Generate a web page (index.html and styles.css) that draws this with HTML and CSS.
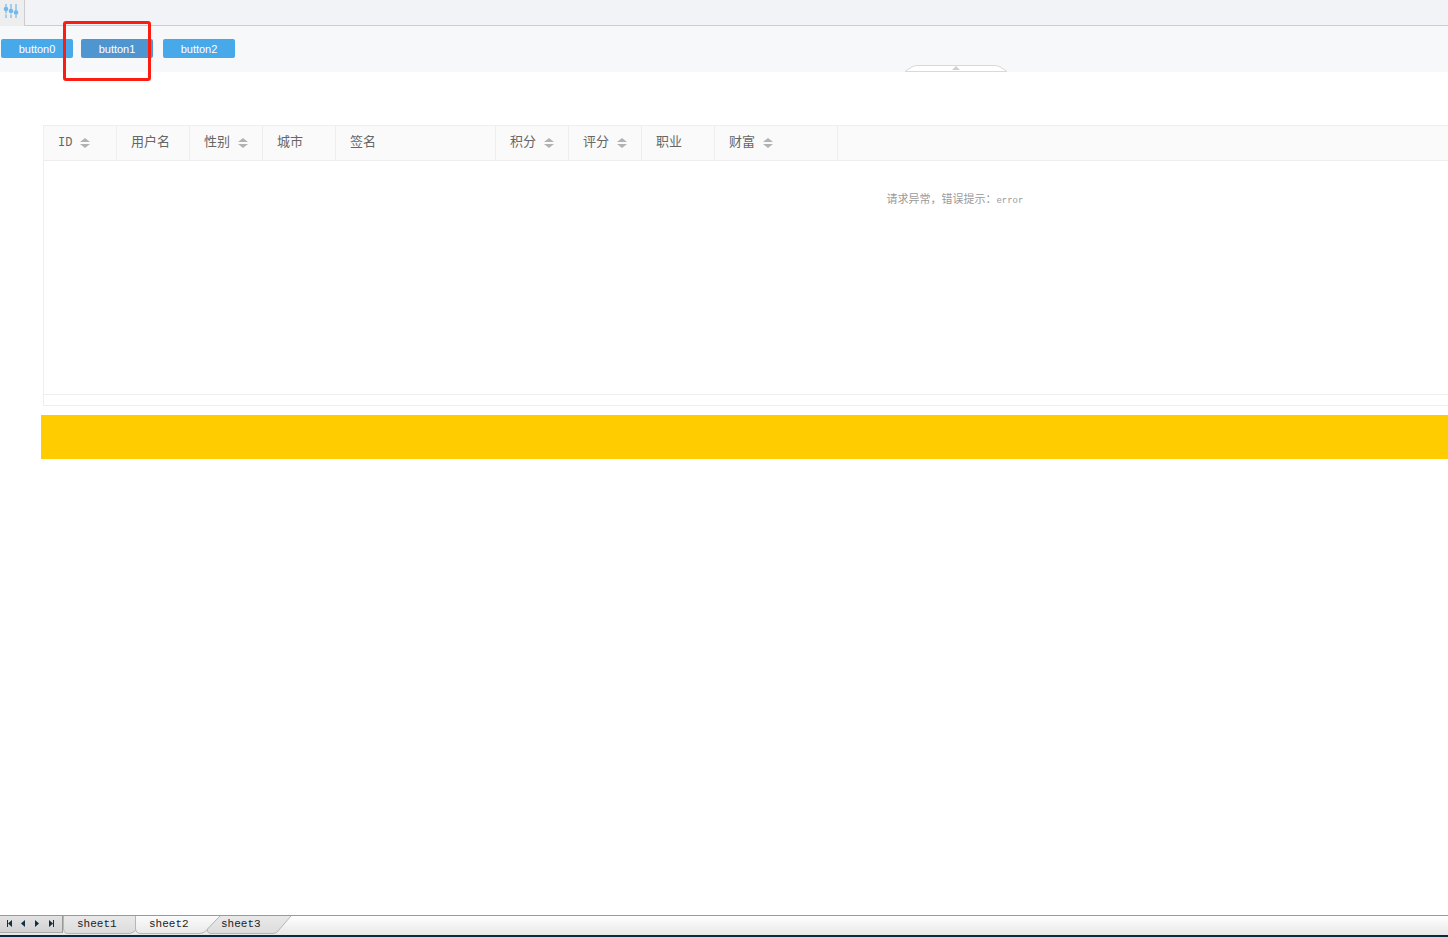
FILE: index.html
```html
<!DOCTYPE html>
<html lang="zh-CN">
<head>
<meta charset="utf-8">
<title>sheet2</title>
<link rel="stylesheet" href="styles.css">
</head>
<body>
<div class="tabbar">
  <button class="settings" type="button" aria-label="Settings">
    <svg width="16" height="16" viewBox="0 0 16 16" fill="none" stroke-width="2">
      <path d="M3 1V15M8 1V15M13 1V15" stroke="#9fcef1"/>
      <path d="M0 11H16" stroke="#eee" stroke-width="1"/>
      <g fill="#75b9eb"><circle cx="3" cy="6" r="2.300"/><circle cx="8" cy="8" r="2.300"/><circle cx="13" cy="9.500" r="2.300"/></g>
    </svg>
  </button>
  <div class="tabbar-rest"></div>
</div>
<div class="toolbar">
  <button class="btn" type="button">button0</button>
  <div class="marked"><button class="btn btn-active" type="button">button1</button><span class="marker"></span></div>
  <button class="btn" type="button">button2</button>
  <button class="collapse" type="button" aria-label="Collapse">
    <svg width="104" height="7" viewBox="0 0 104 7"><path d="M1 6.500L7 2.500Q10 .5 13 .5H91Q94 .5 97 2.500L103 6.500Z" fill="#fff" stroke="#d9d9d9"/><path d="M48 5L52 1L56 5Z" fill="#d0d0d0"/></svg>
  </button>
</div>
<main class="content">
  <div class="grid">
    <table class="grid-head">
      <colgroup><col class="w-s"><col class="w-s"><col class="w-s"><col class="w-s"><col class="w-l"><col class="w-s"><col class="w-s"><col class="w-s"><col class="w-m"><col></colgroup>
      <thead><tr>
        <th><span class="id">ID</span><span class="sort"></span></th>
        <th>用户名</th>
        <th>性别<span class="sort"></span></th>
        <th>城市</th>
        <th>签名</th>
        <th>积分<span class="sort"></span></th>
        <th>评分<span class="sort"></span></th>
        <th>职业</th>
        <th>财富<span class="sort"></span></th>
        <td></td>
      </tr></thead>
    </table>
    <div class="grid-body"><p class="message">请求异常，错误提示：<span class="latin">error</span></p></div>
    <div class="grid-foot"></div>
  </div>
  <div class="banner"></div>
</main>
<footer class="sheets">
  <div class="pager">
    <button type="button" aria-label="First"><svg width="7" height="7" viewBox="0 0 7 7"><path d="M1 0H2V7H1ZM6 0V7L2 3.500Z"/></svg></button>
    <button type="button" aria-label="Previous"><svg width="7" height="7" viewBox="0 0 7 7"><path d="M5 0V7L1 3.500Z"/></svg></button>
    <button type="button" aria-label="Next"><svg width="7" height="7" viewBox="0 0 7 7"><path d="M1 0V7L5 3.500Z"/></svg></button>
    <button type="button" aria-label="Last"><svg width="7" height="7" viewBox="0 0 7 7"><path d="M1 0V7L5 3.500ZM5 0H6V7H5Z"/></svg></button>
  </div>
  <div class="tabs">
    <svg class="tabs-shape" width="230" height="19" viewBox="0 0 230 19">
      <defs>
        <linearGradient id="tab" x2="0" y2="1"><stop stop-color="#e9e9e9"/><stop offset="1" stop-color="#dcdcdc"/></linearGradient>
        <linearGradient id="open" x2="0" y2="1"><stop stop-color="#fbfbfb"/><stop offset="1" stop-color="#e9e9e9"/></linearGradient>
      </defs>
      <g stroke="#b9b5b2">
        <path d="M.5 0V13Q1 17.500 5 17.500H66Q70 17.500 74 13V0" fill="url(#tab)"/>
        <path d="M72.500 0V13Q73 17.500 78 17.500H137Q141 17.500 145 13L157 0" fill="url(#open)"/>
        <path d="M157 0L144.500 13Q143.500 17.500 149 17.500H210Q213 17.500 215 15L228 0" fill="url(#tab)"/>
      </g>
    </svg>
    <button class="tab" type="button">sheet1</button>
    <button class="tab" type="button">sheet2</button>
    <button class="tab" type="button">sheet3</button>
  </div>
</footer>
</body>
</html>
```
FILE: styles.css
```css
* { box-sizing: border-box; }
body {
  margin: 0;
  min-height: 100vh;
  display: flex;
  flex-direction: column;
  overflow-x: hidden;
  background: #fff;
  font-family: "Liberation Sans", "Noto Sans CJK SC", sans-serif;
}
button { border: 0; padding: 0; margin: 0; background: none; font: inherit; color: inherit; }
svg { display: block; }
.tabbar { display: flex; height: 26px; background: #f2f3f7; }
.settings { width: 25px; padding: 3px 0 7px 3px; background: #eee; border-right: 1px solid #ccccd2; }
.tabbar-rest { flex: 1; border-bottom: 1px solid #ccccd2; }
.toolbar { position: relative; display: flex; height: 46px; padding: 13px 1px; background: #f7f8fa; }
.btn {
  width: 72px;
  height: 19px;
  padding-top: 1px;
  border-radius: 2px;
  background: #47a8ea;
  color: #fff;
  font-size: 11px;
  line-height: 18px;
}
.btn-active { display: block; background: #4f96d0; }
.marked { position: relative; margin: 0 10px 0 8px; }
.marker {
  position: absolute;
  left: -18px;
  top: -18px;
  width: 88px;
  height: 60px;
  border: 3px solid #fc1d12;
  border-radius: 3px;
  pointer-events: none;
}
.collapse { position: absolute; left: 66%; bottom: 0; margin-left: -52px; }
.content { flex: 1; padding: 53px 0 0 41px; }
.grid { margin-left: 2px; border: 1px solid #eee; border-right: 0; }
.grid-head { width: 100%; table-layout: fixed; border-collapse: separate; border-spacing: 0; background: #fafafa; }
.grid-head th, .grid-head td {
  height: 35px;
  padding: 0 0 0 14px;
  border-bottom: 1px solid #eee;
}
.grid-head th {
  border-right: 1px solid #eee;
  color: #666;
  font: 13px/20px "Liberation Mono", "Noto Sans CJK SC", monospace;
  text-align: left;
  white-space: nowrap;
}
.id { font-size: 12px; }
.w-s { width: 73px; }
.w-m { width: 123px; }
.w-l { width: 160px; }
.sort { display: inline-grid; gap: 2px; height: 10px; margin-left: 8px; vertical-align: middle; }
.sort::before, .sort::after { content: ""; border: 5px solid transparent; }
.sort::before { border-top: 0; border-bottom: 4px solid #b2b2b2; }
.sort::after { border-bottom: 0; border-top: 4px solid #b2b2b2; }
.grid-body { height: 233px; padding: 27px 0 0 60%; }
.message { margin: 0; color: #999; font: 11px/20px "Noto Sans CJK SC", sans-serif; white-space: nowrap; }
.latin { font: 9px "Liberation Mono", monospace; }
.grid-foot { height: 11px; border-top: 1px solid #eee; }
.banner { height: 44px; margin-top: 9px; background: #fc0; }
.sheets {
  display: flex;
  height: 22px;
  border-top: 1px solid #999;
  border-bottom: 2px solid #062a40;
  background: linear-gradient(#fff, #e7e7e7);
}
.pager {
  display: flex;
  width: 63px;
  height: 17px;
  padding: 0 4px 2px 2px;
  border-right: 1px solid #999;
  border-bottom: 1px solid #aaa;
  background: linear-gradient(#e2e2e2, #d2d2d2);
}
.pager button { flex: 1; display: grid; place-items: center; }
.pager svg { fill: #0b3147; }
.tabs { position: relative; display: flex; padding-left: 1px; }
.tabs-shape { position: absolute; left: 0; top: 0; }
.tab {
  position: relative;
  width: 72px;
  height: 17px;
  padding-left: 13px;
  color: #222;
  font: 11px/17px "Liberation Mono", monospace;
  text-align: left;
}
```
